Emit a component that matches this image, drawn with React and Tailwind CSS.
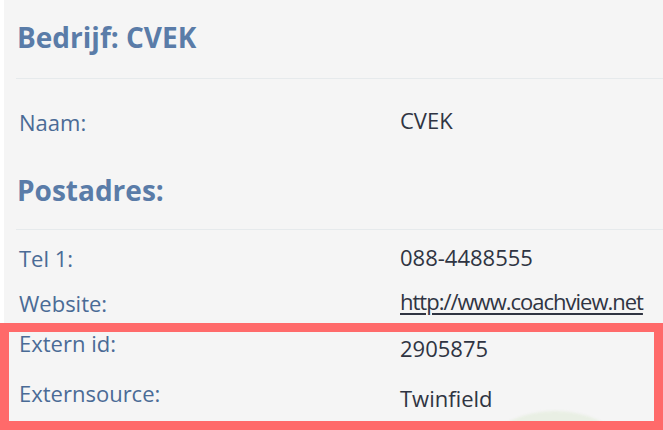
export default function App() {
  const font = { fontFamily: '"Open Sans", "Noto Sans", sans-serif' };
  return (
    <div className="relative w-[663px] h-[430px] overflow-hidden bg-white" style={font}>
      <div className="ml-[4px] h-full bg-[#f5f5f5] pl-[12px]">
        <h2 className="pt-[18px] text-[28px] leading-[38px] font-bold text-[#5a7ca8] pl-[1px]">
          Bedrijf: CVEK
        </h2>
        <div className="mt-[22px] border-t border-[#e6eaec]" />

        <div className="mt-[28px] flex h-[30px] text-[22px] leading-[30px] pl-[3px]">
          <span className="w-[381px] text-[#4a6b96]">Naam:</span>
          <span className="mt-[-2px] text-[#2f3442]">CVEK</span>
        </div>

        <h3 className="mt-[34px] text-[28px] leading-[38px] font-bold text-[#5a7ca8] pl-[1px]">
          Postadres:
        </h3>
        <div className="mt-[20px] border-t border-[#e6eaec]" />

        <div className="mt-[13px] text-[22px] leading-[30px] pl-[3px]">
          <div className="flex h-[45px]">
            <span className="w-[381px] text-[#4a6b96]">Tel 1:</span>
            <span className="mt-[-1px] text-[#2f3442]">088-4488555</span>
          </div>
          <div className="flex h-[40px]">
            <span className="w-[381px] text-[#4a6b96]">Website:</span>
            <a href="#" className="mt-[-2px] tracking-[-1px] text-[#2f3442] underline underline-offset-[3px]">
              http://www.coachview.net
            </a>
          </div>
          <div className="flex h-[50px]">
            <span className="w-[381px] text-[#4a6b96]">Extern id:</span>
            <span className="pt-[5px] text-[#2f3442]">2905875</span>
          </div>
          <div className="flex h-[40px]">
            <span className="w-[381px] text-[#4a6b96]">Externsource:</span>
            <span className="pt-[5px] text-[#2f3442]">Twinfield</span>
          </div>
        </div>
      </div>

      {/* faint decorative circle peeking at the bottom */}
      <div className="absolute left-[449px] top-[411px] h-[212px] w-[212px] rounded-full bg-[#e9efe4] blur-[1px]" />

      {/* highlight frame around the external-source rows */}
      <div className="absolute left-0 top-[323px] h-[107px] w-[663px] border-[9px] border-[#ff6a6a]" />
    </div>
  );
}
